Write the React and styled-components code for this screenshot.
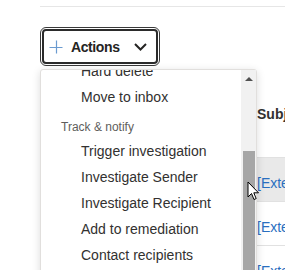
import React from "react";
import styled, { createGlobalStyle } from "styled-components";

const GlobalStyle = createGlobalStyle`
  body {
    margin: 0;
    background: #ffffff;
    font-family: "Liberation Sans", Arial, sans-serif;
    overflow: hidden;
  }
`;

const PageUI = styled.div`
  position: relative;
  height: 270px;
  padding-left: 40px;
  overflow: hidden;
`;

const TopRuleUI = styled.div`
  margin-top: 6px;
  height: 1px;
  background: #e6e6e6;
`;

const ToolbarUI = styled.div`
  position: relative;
  margin-top: 22px;
  padding-left: 2px;
  z-index: 10;
`;

const ActionsButtonUI = styled.button`
  display: flex;
  align-items: center;
  box-sizing: border-box;
  width: 116px;
  height: 35px;
  padding: 0 0 0 5px;
  border: 2px solid #2b2b2b;
  border-radius: 4px;
  outline: 1px solid #3a3a3a;
  outline-offset: 1px;
  background: #ffffff;
  color: #252423;
  font-family: inherit;
  font-size: 14px;
  font-weight: 700;
  letter-spacing: -0.4px;
  cursor: pointer;
`;

const ButtonLabelUI = styled.span`
  margin: 0 14px 0 8px;
`;

const MenuUI = styled.div`
  position: absolute;
  top: 40px;
  left: 0;
  display: flex;
  box-sizing: border-box;
  width: 217px;
  height: 212px;
  background: #ffffff;
  border: 1px solid #e1dfdd;
  border-radius: 3px 3px 0 0;
  box-shadow: 0 2px 8px rgba(0, 0, 0, 0.14);
`;

const MenuListUI = styled.div`
  flex: 1;
  overflow: hidden;
`;

const MenuScrollUI = styled.div`
  margin-top: ${(p) => -p.offset}px;
`;

const MenuItemUI = styled.div`
  height: 26px;
  line-height: 26px;
  padding-left: 40px;
  color: #323130;
  font-size: 14px;
  white-space: nowrap;
`;

const SectionHeaderUI = styled.div`
  padding: 6px 0 0 20px;
  line-height: 22px;
  color: #605e5c;
  font-size: 12px;
  white-space: nowrap;
`;

const ScrollbarUI = styled.div`
  display: flex;
  flex-direction: column;
  align-items: center;
  width: 15px;
  background: #f1f1f1;
`;

const ScrollArrowUI = styled.div`
  margin-top: 7px;
  width: 0;
  height: 0;
  border-left: 4px solid transparent;
  border-right: 4px solid transparent;
  border-bottom: 4px solid #505050;
`;

const ScrollThumbUI = styled.div`
  margin-top: 70px;
  flex: 1;
  width: 12px;
  background: #a6a6a6;
`;

const TableUI = styled.div`
  margin-top: 31px;
`;

const HeaderRowUI = styled.div`
  box-sizing: border-box;
  height: 63px;
  padding: 9px 0 0 217px;
  line-height: 20px;
  border-bottom: 1px solid #e1e1e1;
  color: #323130;
  font-size: 14px;
  font-weight: 700;
  white-space: nowrap;
`;

const RowUI = styled.div`
  box-sizing: border-box;
  height: 44px;
  padding: 15px 0 0 217px;
  line-height: 20px;
  border-bottom: 1px solid #e1e1e1;
  background: ${(p) => (p.hover ? "#e9e9e9" : "transparent")};
  color: #2a6fc0;
  font-size: 14px;
  white-space: nowrap;
`;

const CursorUI = styled.svg`
  position: absolute;
  left: 247px;
  top: 181px;
  z-index: 20;
`;

const PlusIcon = () => (
  <svg width="14" height="14" viewBox="0 0 14 14">
    <path d="M7.5 0.5 V13.5 M0.5 7.5 H13.5" stroke="#6b9bd0" strokeWidth="1.2" fill="none" />
  </svg>
);

const ChevronIcon = () => (
  <svg width="13" height="8" viewBox="0 0 13 8">
    <path d="M1 1 L6.5 6.5 L12 1" stroke="#252423" strokeWidth="2" fill="none" />
  </svg>
);

const items = [
  { type: "item", label: "Hard delete" },
  { type: "item", label: "Move to inbox" },
  { type: "header", label: "Track & notify" },
  { type: "item", label: "Trigger investigation" },
  { type: "item", label: "Investigate Sender" },
  { type: "item", label: "Investigate Recipient" },
  { type: "item", label: "Add to remediation" },
  { type: "item", label: "Contact recipients" },
];

const rows = [
  "[External] Action required: verify account",
  "[External] Invoice pending approval",
  "[External] Shared document notification",
];

export default function App() {
  return (
    <PageUI>
      <GlobalStyle />
      <TopRuleUI />
      <ToolbarUI>
        <ActionsButtonUI>
          <PlusIcon />
          <ButtonLabelUI>Actions</ButtonLabelUI>
          <ChevronIcon />
        </ActionsButtonUI>
        <MenuUI>
          <MenuListUI>
            <MenuScrollUI offset={12}>
              {items.map((it) =>
                it.type === "header" ? (
                  <SectionHeaderUI key={it.label}>{it.label}</SectionHeaderUI>
                ) : (
                  <MenuItemUI key={it.label}>{it.label}</MenuItemUI>
                )
              )}
            </MenuScrollUI>
          </MenuListUI>
          <ScrollbarUI>
            <ScrollArrowUI />
            <ScrollThumbUI />
          </ScrollbarUI>
        </MenuUI>
      </ToolbarUI>
      <TableUI>
        <HeaderRowUI>Subject</HeaderRowUI>
        {rows.map((r, i) => (
          <RowUI key={r} hover={i === 0}>
            {r}
          </RowUI>
        ))}
      </TableUI>
      <CursorUI width="13" height="20" viewBox="0 0 13 20">
        <path d="M1 1 L1 16 L4.5 12.5 L7 18.5 L9.2 17.6 L6.8 11.8 L11.5 11.8 Z" fill="#ffffff" stroke="#000000" strokeWidth="1" strokeLinejoin="round" />
      </CursorUI>
    </PageUI>
  );
}
